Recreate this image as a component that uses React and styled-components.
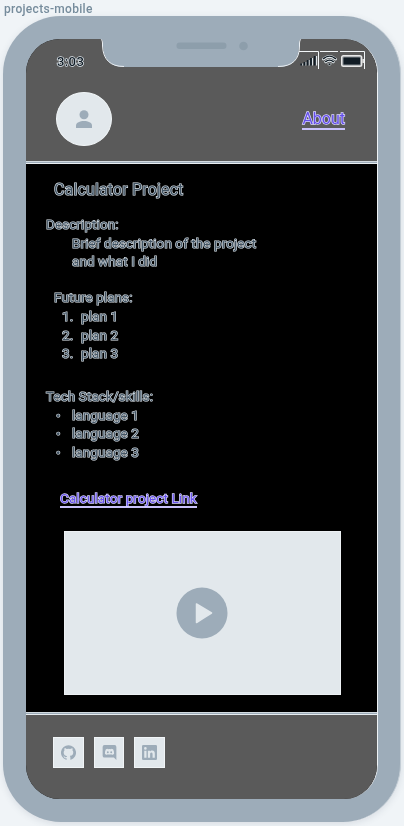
import React from "react";
import styled, { createGlobalStyle } from "styled-components";

const Global = createGlobalStyle`
  * { box-sizing: border-box; }
  body { margin: 0; background: #f0f4f7; font-family: Roboto, "Liberation Sans", sans-serif; }
`;

const Page = styled.main`
  width: 404px;
  height: 826px;
  overflow: hidden;
  padding-left: 3px;
`;
const Caption = styled.div`
  height: 16px;
  padding: 1px 0 0 1px;
  color: #768c9c;
  font-size: 12px;
  font-weight: 500;
  line-height: 16px;
  letter-spacing: 0.3px;
  will-change: transform;
`;
const Device = styled.div`
  width: 398px;
  height: 806px;
  padding: 23px;
  border-radius: 58px;
  background: #9dacb9;
  border-right: 1px solid #c3cdd5;
  box-shadow: 0 2px 7px rgba(60, 80, 100, 0.13);
`;
const Screen = styled.div`
  position: relative;
  width: 352px;
  height: 760px;
  overflow: hidden;
  border-radius: 34px;
  background: #000;
  border-right: 1px solid #eef2f5;
  display: flex;
  flex-direction: column;
  will-change: transform;
`;
const Notch = styled.svg`
  position: absolute;
  left: 74px;
  top: 0;
`;
const Header = styled.header`
  height: 122px;
  background: #5a5a5a;
`;
const StatusBar = styled.div`
  height: 30px;
  padding: 12px 12px 0 31px;
  display: flex;
  justify-content: space-between;
`;
const StatusIcons = styled.svg`
  display: block;
`;
const outline = `
  paint-order: stroke fill;
  -webkit-text-stroke: 1.4px #dfe7ed;
`;
const Time = styled.div`
  ${outline}
  padding-top: 1px;
  color: #111c25;
  font-size: 13px;
  font-weight: 500;
  line-height: 20px;
  letter-spacing: 0.4px;
`;
const NavRow = styled.div`
  display: flex;
  align-items: center;
  justify-content: space-between;
  padding: 23px 32px 0 30px;
`;
const Avatar = styled.div`
  width: 56px;
  height: 54px;
  border-radius: 50%;
  background: #e2e8ec;
  border: 1px solid #f1f5f7;
  display: flex;
  align-items: center;
  justify-content: center;
`;
const TextLink = styled.a`
  ${outline}
  -webkit-text-stroke-color: #dcd8ff;
  color: #6550ea;
  font-size: ${(p) => p.$size}px;
  line-height: ${(p) => p.$line}px;
  letter-spacing: ${(p) => p.$track || 0}px;
  border-bottom: 2px solid #c9c2fb;
  white-space: nowrap;
`;
const Divider = styled.div`
  flex: none;
  height: 3px;
  background: #9dacb9;
  border-top: 1px solid #d2dae0;
  border-bottom: 1px solid #e7edf1;
`;
const Content = styled.section`
  height: 548px;
  padding: 16px 0 0 20px;
`;
const Title = styled.h1`
  ${outline}
  -webkit-text-stroke-width: 1.2px;
  margin: 0 0 15px 8px;
  color: #435565;
  font-size: 16px;
  font-weight: 400;
  line-height: 20px;
  letter-spacing: 0.15px;
`;
const Block = styled.div`
  ${outline}
  -webkit-text-stroke-width: 1.2px;
  margin: 0 0 ${(p) => p.$gap}px ${(p) => p.$indent || 0}px;
  color: #435565;
  font-size: 13.5px;
  line-height: 18.7px;
  letter-spacing: 0.08px;
`;
const Indented = styled.div`
  padding-left: 26px;
`;
const Item = styled.div`
  display: grid;
  grid-template-columns: ${(p) => p.$marker}px 1fr;
  padding-left: ${(p) => p.$inset}px;
`;
const LinkRow = styled.div`
  display: flex;
  padding-left: 14px;
`;
const Video = styled.div`
  width: 277px;
  height: 164px;
  margin: 23px 0 0 18px;
  padding-right: 2px;
  background: #e2e8ec;
  border: 1px solid #edf1f4;
  display: flex;
  align-items: center;
  justify-content: center;
`;
const Footer = styled.footer`
  flex: 1;
  padding: 22px 0 0 27px;
  background: #5a5a5a;
  display: flex;
  gap: 10px;
`;
const Social = styled.div`
  width: ${(p) => p.$w || 31}px;
  height: 31px;
  background: #e2e8ec;
  border: 1px solid #f1f5f7;
  display: flex;
  align-items: center;
  justify-content: center;
`;

const icons = {
  github:
    "M12 .3a12 12 0 0 0-3.8 23.4c.6.1.8-.3.8-.6v-2c-3.3.7-4-1.6-4-1.6-.6-1.4-1.4-1.8-1.4-1.8-1-.7.1-.7.1-.7 1.2 0 1.900 1.200 1.900 1.200 1 1.800 2.800 1.300 3.500 1 0-.8.4-1.300.7-1.600-2.700-.3-5.500-1.300-5.500-6 0-1.200.5-2.300 1.300-3.100-.2-.4-.6-1.600 0-3.200 0 0 1-.3 3.400 1.200a11.500 11.500 0 0 1 6 0c2.300-1.500 3.300-1.200 3.300-1.200.6 1.600.2 2.800 0 3.200.9.8 1.300 1.900 1.300 3.200 0 4.600-2.800 5.600-5.500 5.900.5.4.9 1 .9 2.200v3.300c0 .3.1.7.8.6A12 12 0 0 0 12 .3",
  discord:
    "M4 0h16a3 3 0 0 1 3 3v21l-4-4H4a3 3 0 0 1-3-3V3a3 3 0 0 1 3-3Zm11 6-.4.8a11 11 0 0 0-5.200 0L9 6c-1.200.2-2.200.6-3 1.100C4.800 9.500 4.500 12 4.700 14.400c1 .8 2.200 1.200 3.400 1.400l.8-1.200c2 .6 4.200.6 6.200 0l.8 1.200c1.200-.2 2.400-.6 3.400-1.400.2-2.600-.2-5-1.300-7.300-.9-.5-1.900-.9-3-1.100ZM9.300 10a1.500 1.500 0 1 1 0 3 1.500 1.500 0 0 1 0-3Zm5.400 0a1.500 1.500 0 1 1 0 3 1.500 1.500 0 0 1 0-3Z",
  linkedin:
    "M2 0h20a2 2 0 0 1 2 2v20a2 2 0 0 1-2 2H2a2 2 0 0 1-2-2V2a2 2 0 0 1 2-2Zm1.600 9v11.400h3.600V9Zm1.800-5.700a2.100 2.100 0 1 0 0 4.200 2.100 2.100 0 0 0 0-4.200ZM9.400 9v11.400H13v-5.600c0-1.500.3-2.900 2.100-2.900s1.800 1.700 1.800 3v5.500h3.600v-6.200c0-3.100-.7-5.500-4.300-5.500-1.700 0-2.800.9-3.300 1.800V9Z",
};

const SocialIcon = ({ name }) => (
  <svg width="15" height="15" viewBox="0 0 24 24">
    <path d={icons[name]} fill="#9dacb9" fillRule="evenodd" />
  </svg>
);

export default function App() {
  return (
    <Page>
      <Global />
      <Caption>projects-mobile</Caption>
      <Device>
        <Screen>
          <Header>
            <StatusBar>
              <Time>3:03</Time>
              <StatusIcons width="66" height="19" viewBox="0 0 66 19">
                <path d="M0 .5H19.500V18M21 .5H39M41 .5H65.500V18" fill="none" stroke="#f3f7f9" />
                <path d="M3.500 12.500v2M6.700 11v3.500M10 9v5.500M13.400 7v7.500M17.500 5v9.500" stroke="#dce4e9" strokeWidth="1.300" />
                <path d="M2.300 12.500v2M5.500 11v3.500M8.700 9v5.500M12 7v7.500M15.700 5v9.500" stroke="#111c25" strokeWidth="1.800" />
                <g fill="none" strokeLinecap="round">
                  <path d="M24.500 8q6-5 12 0M26.700 10.800q3.800-3 7.600 0" stroke="#e5ecf0" strokeWidth="2.800" />
                  <path d="M24.500 7.600q6-5 12 0M26.700 10.600q3.800-3 7.600 0" stroke="#111c25" strokeWidth="1.400" />
                </g>
                <path d="m28.500 12.700 2 2.300 2-2.300q-2-1.200-4 0Z" fill="#111c25" stroke="#e5ecf0" strokeWidth=".6" />
                <rect x="42.700" y="4.700" width="20" height="10.600" rx="1.800" fill="#858b90" stroke="#e8e8e8" strokeWidth="1.400" />
                <rect x="44.500" y="6.500" width="16.500" height="7" rx=".5" fill="#111c25" />
                <path d="M64.200 8v4" stroke="#e8e8e8" strokeWidth="1.500" />
              </StatusIcons>
            </StatusBar>
            <NavRow>
              <Avatar>
                <svg width="16" height="18" viewBox="0 0 16 18" fill="#9dacb9">
                  <circle cx="8" cy="4.700" r="4.500" />
                  <path d="M0 18v-2.500c0-3 4-4.500 8-4.500s8 1.500 8 4.500V18Z" />
                </svg>
              </Avatar>
              <TextLink $size={16} $line={19}>About</TextLink>
            </NavRow>
          </Header>
          <Divider />
          <Content>
            <Title>Calculator Project</Title>
            <Block $gap={17}>
              Description:
              <Indented>Brief description of the project<br />and what I did</Indented>
            </Block>
            <Block $gap={24} $indent={8}>
              Future plans:
              {[1, 2, 3].map((n) => (
                <Item key={n} $marker={19} $inset={8}><span>{n}.</span><span>plan {n}</span></Item>
              ))}
            </Block>
            <Block $gap={28}>
              Tech Stack/skills:
              {[1, 2, 3].map((n) => (
                <Item key={n} $marker={16} $inset={10}><span>•</span><span>language {n}</span></Item>
              ))}
            </Block>
            <LinkRow>
              <TextLink $size={13.5} $line={16} $track={0.11}>Calculator project Link</TextLink>
            </LinkRow>
            <Video>
              <svg width="52" height="52" viewBox="0 0 52 52">
                <circle cx="26" cy="26" r="25.500" fill="#9dacb9" />
                <path d="M20.500 17v18.500L35.500 26Z" fill="#e2e8ec" stroke="#e2e8ec" strokeWidth="1.500" strokeLinejoin="round" />
              </svg>
            </Video>
          </Content>
          <Divider />
          <Footer>
            <Social><SocialIcon name="github" /></Social>
            <Social $w={30}><SocialIcon name="discord" /></Social>
            <Social><SocialIcon name="linkedin" /></Social>
          </Footer>
          <Notch width="202" height="28" viewBox="0 0 202 28">
            <path d="M0 0Q3 0 3 4V7Q4 28 24 28H178Q199 28 199 7V4Q199 0 202 0Z" fill="#9dacb9" />
            <path d="M1 .5Q2.500 .5 2.500 4V7Q3.500 27.500 24 27.500M178 27.500Q199.500 27.500 199.500 7V4Q199.500 .5 201 .5" fill="none" stroke="#e9eef2" />
            <rect x="76.500" y="3.500" width="50" height="6.500" rx="3.200" fill="#8d9eab" />
            <circle cx="143.500" cy="7" r="4.300" fill="#8d9eab" />
          </Notch>
        </Screen>
      </Device>
    </Page>
  );
}
